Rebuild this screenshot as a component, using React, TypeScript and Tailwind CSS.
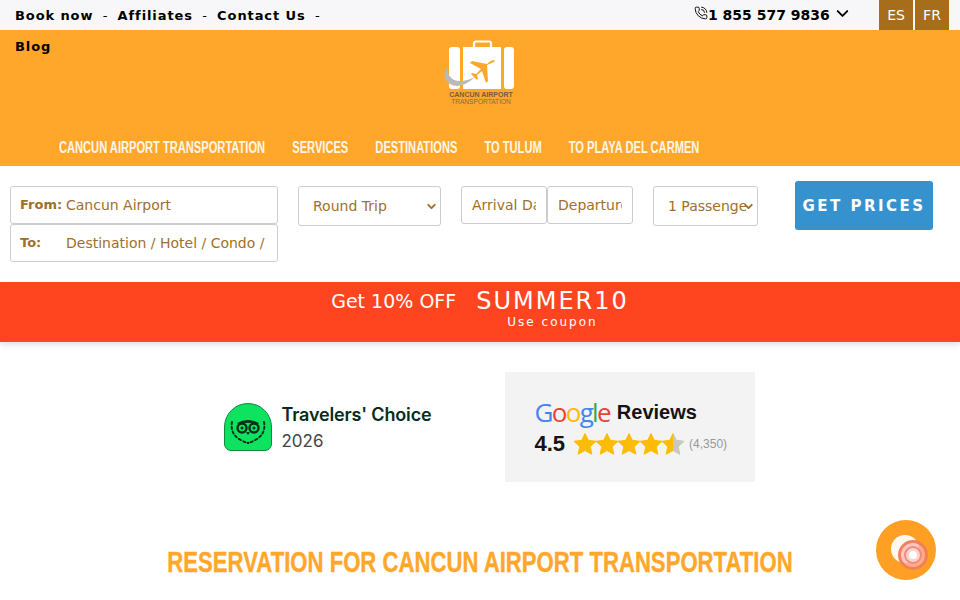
import { ChevronDown, PhoneCall } from "lucide-react";

const sans = "font-['DejaVu_Sans',sans-serif]";
const condensed = "font-['Liberation_Sans',sans-serif]";

const navItems = [
  "CANCUN AIRPORT TRANSPORTATION",
  "SERVICES",
  "DESTINATIONS",
  "TO TULUM",
  "TO PLAYA DEL CARMEN",
];

function Logo() {
  return (
    <svg viewBox="0 0 78 70" className="h-[70px] w-[78px]">
      <path d="M33 10V5.500Q33 3.500 35 3.500H48Q50 3.500 50 5.500V10" fill="none" stroke="#fff" strokeWidth="2.200" />
      <rect x="8" y="9" width="11" height="42" rx="3" fill="#fff" />
      <path d="M22 9H60V51H22Z" fill="#fff" />
      <rect x="63" y="9" width="10" height="42" rx="3" fill="#fff" />
      <path d="M6 29Q0 40 9 46Q20 52 34 39Q22 45 13 42Q6 38 6 29Z" fill="#b9b9b9" />
      <path
        d="M53 24Q55 22 52 22Q49 23 46 26L31 23L29 25L40 31L35 36L31 35L30 36L33 39L36 42L37 41L36 37L41 33L45 45L47 43L46 27Z"
        fill="#ffa72b"
      />
      <text x="40" y="59" textAnchor="middle" fontSize="7" fontWeight="700" fill="#7a5a40" fontFamily="Liberation Sans">
        CANCUN AIRPORT
      </text>
      <text x="40" y="66" textAnchor="middle" fontSize="6.600" fill="#8a6a3d" fontFamily="Liberation Sans">
        TRANSPORTATION
      </text>
    </svg>
  );
}

function TopBar() {
  return (
    <div className={`relative z-10 flex h-[30px] bg-[#f7f7f9] ${sans}`}>
      <div className="w-[340px] pl-[15px] pt-[8px] text-[13px] font-bold tracking-[0.9px] text-black">
        <div className="flex h-[16px] items-center whitespace-pre">
          <span>Book now</span>
          <span className="font-normal tracking-[0.6px]">  -  </span>
          <span>Affiliates</span>
          <span className="font-normal tracking-[0.6px]">  -  </span>
          <span>Contact Us</span>
          <span className="font-normal tracking-[0.6px]">  -</span>
        </div>
        <div className="mt-[15px] h-[16px] leading-[16px]">Blog</div>
      </div>
      <div className="ml-[354px] flex h-[30px] w-[155px] items-center whitespace-nowrap text-[14px] font-bold text-black">
        <PhoneCall size={14} strokeWidth={1.6} className="-mt-[4px] shrink-0" />
        <span>1 855 577 9836</span>
        <ChevronDown size={19} strokeWidth={2.4} className="-mt-[3px] ml-[3px] shrink-0" />
      </div>
      <div className="ml-[30px] flex gap-[2px] text-[14px] text-white">
        <span className="flex h-[30px] w-[34px] items-center justify-center bg-[#a66d1b]">ES</span>
        <span className="flex h-[30px] w-[34px] items-center justify-center bg-[#a66d1b]">FR</span>
      </div>
    </div>
  );
}

function Header() {
  return (
    <header className="flex h-[136px] flex-col bg-[#ffa72b]">
      <div className="flex justify-center pt-[8px]">
        <Logo />
      </div>
      {/* no condensed face installed, so squeeze the arial width */}
      <nav
        className={`ml-[59px] mt-[31px] flex w-max origin-left scale-x-[.695] gap-[39px] text-[16px] font-bold leading-[18px] text-[#fff6e8] ${condensed}`}
      >
        {navItems.map((item) => (
          <a key={item}>{item}</a>
        ))}
      </nav>
    </header>
  );
}

const fieldBorder = "rounded-[3px] border border-[#ccc] bg-white text-[#a0702a]";

function SelectField({ value, className }: { value: string; className: string }) {
  return (
    <div className={`relative ml-[20px] mt-[5px] h-[40px] ${className}`}>
      <select defaultValue={value} className={`h-full w-full appearance-none pl-[14px] pr-[11px] ${fieldBorder}`}>
        <option>{value}</option>
      </select>
      <ChevronDown size={13} strokeWidth={3.5} className="absolute right-[3px] top-[14px] text-[#a0702a]" />
    </div>
  );
}

function SearchForm() {
  return (
    <form className={`flex h-[116px] items-start pl-[10px] pt-[15px] text-[14px] ${sans}`}>
      <div className="mt-[5px] w-[268px]">
        <div className={`flex h-[38px] items-center pl-[9px] ${fieldBorder}`}>
          <span className="w-[46px] shrink-0 text-[13px] font-bold">From:</span>
          <span>Cancun Airport</span>
        </div>
        <div className={`flex h-[38px] items-center pl-[9px] ${fieldBorder}`}>
          <span className="w-[46px] shrink-0 text-[13px] font-bold">To:</span>
          <span className="overflow-hidden whitespace-nowrap pr-[12px]">Destination / Hotel / Condo /</span>
        </div>
      </div>
      <SelectField value="Round Trip" className="w-[143px]" />
      <input
        readOnly
        placeholder="Arrival Date"
        className={`ml-[20px] mt-[5px] h-[38px] w-[86px] px-[10px] placeholder:text-[#a0702a] ${fieldBorder}`}
      />
      <input
        readOnly
        placeholder="Departure Date"
        className={`mt-[5px] h-[38px] w-[86px] px-[10px] placeholder:text-[#a0702a] ${fieldBorder}`}
      />
      <SelectField value="1 Passenger" className="w-[105px]" />
      <button
        type="button"
        className="ml-[37px] h-[49px] w-[138px] rounded-[3px] bg-[#3592cf] pt-[1px] text-[15px] font-bold tracking-[2.5px] text-white"
      >
        GET PRICES
      </button>
    </form>
  );
}

function PromoBanner() {
  return (
    <div className={`flex h-[60px] justify-center bg-[#ff4520] text-white shadow-[0_3px_6px_rgba(0,0,0,0.12)] ${sans}`}>
      <span className="mr-[20px] mt-[8px] text-[19px] leading-[22px]">Get 10% OFF</span>
      <div className="flex flex-col items-center pt-[5px]">
        <span className="text-[24px] leading-[28px] tracking-[2px]">SUMMER10</span>
        <span className="text-[12px] leading-[15px] tracking-[2px]">Use coupon</span>
      </div>
    </div>
  );
}

function Owl() {
  return (
    <svg viewBox="0 0 48 48" className="h-[48px] w-[48px]">
      <path d="M.500 24A23.500 23.500 0 0 1 47.500 24V41A6.500 6.500 0 0 1 41 47.500H7A6.500 6.500 0 0 1 .500 41Z" fill="#0ee35f" stroke="#0a8a45" />
      <g fill="none" stroke="#06301c" strokeWidth="2.400">
        <circle cx="18" cy="25" r="4.500" />
        <circle cx="30" cy="25" r="4.500" />
      </g>
      <circle cx="18" cy="25" r="1.500" fill="#06301c" />
      <circle cx="30" cy="25" r="1.500" fill="#06301c" />
      <path d="M13 20Q24 14 35 20L33 21.500Q24 18 15 21.500Z" fill="#06301c" />
      <path d="M22 29L24 32L26 29Z" fill="#06301c" />
      <g fill="none" stroke="#06301c" strokeWidth="2" strokeLinecap="round" strokeDasharray="2.200 2.600">
        <path d="M8 19Q6 30 15 36Q20 39 24 40" />
        <path d="M40 19Q42 30 33 36Q28 39 24 40" />
      </g>
    </svg>
  );
}

function Star({ id, fill }: { id: string; fill: number }) {
  return (
    <svg viewBox="1 1.500 22 21" className="h-[22px] w-[22px]">
      <defs>
        <linearGradient id={id}>
          <stop offset={fill} stopColor="#fcbc05" />
          <stop offset={fill} stopColor="#c9c7c1" />
        </linearGradient>
      </defs>
      <path
        d="M12 1.500L15.300 8.300L23 9.300L17.300 14.600L18.800 22.300L12 18.500L5.200 22.300L6.700 14.600L1 9.300L8.700 8.300Z"
        fill={`url(#${id})`}
        stroke={`url(#${id})`}
        strokeWidth="1"
        strokeLinejoin="round"
      />
    </svg>
  );
}

function Badges() {
  return (
    <div className="flex justify-center pl-[18px] pt-[30px]">
      <div className="flex h-[110px] w-[281px] items-center gap-[10px] pb-[1px]">
        <Owl />
        <div className="pt-[2px] text-[#062c1b]">
          <div className="font-['Inter',sans-serif] text-[18px] font-semibold leading-[27px] tracking-[-0.15px]">Travelers' Choice</div>
          <div className="font-['Inter',sans-serif] text-[17px] leading-[27px] text-[#444]">2026</div>
        </div>
      </div>
      <div className="h-[110px] w-[250px] bg-[#f3f3f3] pl-[30px] pt-[25px]">
        <div className="flex items-center font-['Liberation_Sans',sans-serif] text-[20px] font-bold leading-[30px] text-[#141414]">
          <span className="mr-[7px] font-['Open_Sans',sans-serif] text-[26px] font-normal tracking-[-1.700px]">
            <span className="text-[#4285f4]">G</span>
            <span className="text-[#ea4335]">o</span>
            <span className="text-[#fbbc05]">o</span>
            <span className="text-[#4285f4]">g</span>
            <span className="text-[#34a853]">l</span>
            <span className="text-[#ea4335]">e</span>
          </span>
          Reviews
        </div>
        <div className="mt-[3px] flex items-center font-['Liberation_Sans',sans-serif]">
          <span className="mr-[9px] text-[22px] font-bold leading-[28px] text-[#141414]">4.5</span>
          <Star id="star-1" fill={1} />
          <Star id="star-2" fill={1} />
          <Star id="star-3" fill={1} />
          <Star id="star-4" fill={1} />
          <Star id="star-5" fill={0.5} />
          <span className="ml-[5px] text-[12px] text-[#999]">(4,350)</span>
        </div>
      </div>
    </div>
  );
}

function ChatBubble() {
  return (
    <button className="absolute left-[876px] top-[520px] flex h-[60px] w-[60px] items-center justify-center rounded-full bg-[#ff9f24]">
      <span className="relative -ml-[2px] -mt-[2px] h-[28px] w-[28px] rounded-full bg-[#fff8f0]">
        <span className="absolute left-[7px] top-[5px] flex h-[30px] w-[30px] items-center justify-center rounded-full border-[3px] border-[#f27a55]/90 bg-[#f9b4ac]/70">
          <span className="flex h-[18px] w-[18px] items-center justify-center rounded-full border-[2px] border-[#f08a80] bg-[#fbd3cc]">
            <span className="h-[8px] w-[8px] rounded-full bg-white" />
          </span>
        </span>
      </span>
    </button>
  );
}

export default function App() {
  return (
    <div className="relative h-[600px] w-[960px] overflow-hidden bg-white">
      <TopBar />
      <Header />
      <SearchForm />
      <PromoBanner />
      <Badges />
      <h2
        className={`mt-[62px] scale-x-[.763] whitespace-nowrap text-center text-[29px] font-bold leading-[36px] text-[#ffa72b] [-webkit-text-stroke:0.4px_#ffa72b] ${condensed}`}
      >
        RESERVATION FOR CANCUN AIRPORT TRANSPORTATION
      </h2>
      <ChatBubble />
    </div>
  );
}
